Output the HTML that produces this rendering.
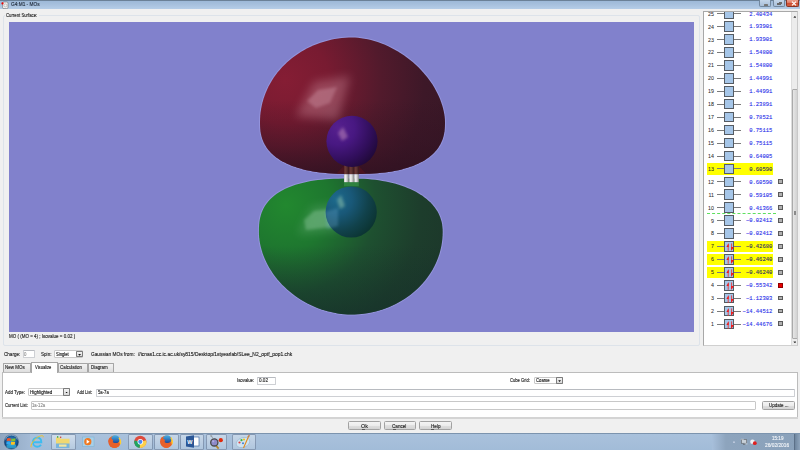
<!DOCTYPE html>
<html><head><meta charset="utf-8">
<style>
*{box-sizing:border-box;margin:0;padding:0}
html,body{width:800px;height:450px;overflow:hidden;background:#f0f0f0;font-family:"Liberation Sans",sans-serif;color:#1e1e1e}
.a{position:absolute}
.tx{position:absolute;line-height:1;transform-origin:0 0;white-space:pre;font-family:"Liberation Sans",sans-serif;-webkit-text-stroke:0.14px currentColor}
.t{position:absolute;font-size:4.6px;line-height:5px;white-space:pre;color:#222}
#title{left:0;top:0;width:800px;height:9px;background:linear-gradient(#6b8197 0,#6b8197 1px,#9db9d8 1px,#a5bfdc 4px,#b5cde7 9px)}
.wb{position:absolute;top:0;height:7.4px;border:0.6px solid #72889f;border-top:none;border-radius:0 0 2px 2px}
#gl{left:9px;top:22px;width:685px;height:310px;background:#8181cc}
#grp{left:3px;top:14.5px;width:697px;height:331px;border:1px solid #dde3ea;border-radius:2px}
#list{left:703px;top:11.3px;width:95px;height:334.5px;background:#fff;border:0.8px solid #a8a8a8;border-right-color:#c8c8c8;border-bottom-color:#d0d0d0;overflow:hidden}
.row{position:absolute;left:0;width:90px;height:12px}
.row.hl::before{content:"";position:absolute;left:3px;top:0.25px;width:66px;height:11.5px;background:#ffff00}
.num{position:absolute;left:0;width:10px;top:4px;text-align:right;font-size:5.3px;line-height:5px;color:#2a2a2a;-webkit-text-stroke:0.05px currentColor}
.ln{position:absolute;left:13.4px;top:5.6px;width:23.6px;height:0.8px;background:#7a7a7a}
.box{position:absolute;left:19.8px;top:0.8px;width:10.2px;height:10.5px;background:#a6c6e8;border:0.8px solid #555b62}
.box svg{position:absolute;left:0;top:0}
.val{position:absolute;left:34px;width:34.3px;text-align:right;top:3.9px;font-family:"Liberation Mono",monospace;font-size:5.5px;line-height:5px;color:#2a30ea;-webkit-text-stroke:0.1px currentColor}
.hl .val{color:#2c2c68}
.chk{position:absolute;left:74.4px;top:3.5px;width:4.8px;height:4.8px;border:1px solid #5a5a5a;background:#b0b0b0}
.chk.red{background:#e80000;border-color:#900000}
#sb{position:absolute;right:0;top:0;width:6.3px;height:100%;background:#ececec;border-left:0.5px solid #ddd}
.inp{position:absolute;background:#fff;border:0.7px solid #ced0d4;border-top-color:#b8bbc0;border-radius:1px}
.cmb{position:absolute;background:#fff;border:0.7px solid #c8c8c8;border-radius:1px}
.dd{position:absolute;right:-0.7px;top:-0.7px;width:7px;height:calc(100% + 1.4px);border:0.7px solid #7c7c7c;border-radius:0.8px;background:linear-gradient(#f4f4f4,#d8d8d8)}
.dd::after{content:"";position:absolute;left:1.5px;top:2.4px;width:2.8px;height:1.9px;background:#111;clip-path:polygon(0 0,100% 0,50% 100%)}
.tab{position:absolute;top:363.4px;height:9px;background:linear-gradient(#f3f3f3,#dedede);border:0.7px solid #a6a6a6;border-bottom:none;border-radius:1px 1px 0 0}
.btn{position:absolute;height:9px;border:0.8px solid #a2a2a2;border-radius:1.5px;background:linear-gradient(#f4f4f4 0,#ececec 50%,#e0e0e0 50%,#d4d4d4 100%)}
#task{left:0;top:433px;width:800px;height:17px;background:linear-gradient(#a9c1dc,#a2bcd8);border-top:0.6px solid #7c94ae}
.tb{position:absolute;top:434px;height:16px;border:0.6px solid rgba(90,110,140,0.55);border-radius:1.5px;background:linear-gradient(rgba(255,255,255,0.35),rgba(255,255,255,0.15))}
</style></head><body>

<!-- title bar -->
<div id="title" class="a"></div>
<svg class="a" style="left:1px;top:0.5px" width="8" height="8" viewBox="0 0 8 8"><rect x="1.6" y="1" width="5.4" height="6.6" rx="1.2" fill="#f2f2f2" stroke="#6a6a6a" stroke-width="0.6"/><circle cx="4.4" cy="4.4" r="1.5" fill="none" stroke="#999" stroke-width="0.5"/><circle cx="1.5" cy="2.4" r="1.1" fill="#e00"/></svg>
<div class="wb" style="left:759px;width:12.3px;background:linear-gradient(#c4d6ea,#a9c0da)"><i class="a" style="left:3.8px;top:3.9px;width:4.6px;height:1.6px;background:#e6d8c0;border:0.5px solid #777;border-radius:0.5px"></i></div>
<div class="wb" style="left:773px;width:11.8px;background:linear-gradient(#c4d6ea,#a9c0da)"><i class="a" style="left:4.8px;top:1.6px;width:3.4px;height:2.6px;border:0.6px solid #6a6a6a;background:#d0d0d0"></i><i class="a" style="left:3.4px;top:2.9px;width:3.4px;height:2.6px;border:0.6px solid #6a6a6a;background:#d0d0d0"></i></div>
<div class="wb" style="left:786.2px;width:12.6px;background:linear-gradient(#eca08e 0,#e07a62 45%,#cf4d33 55%,#d2603f 100%);border-color:#8a3424"><svg class="a" style="left:3.4px;top:0.9px" width="6" height="5" viewBox="0 0 6 5"><path d="M1 0.6L5 4.4M5 0.6L1 4.4" stroke="#fff" stroke-width="1.3"/></svg></div>

<!-- current surface group -->
<div id="grp" class="a"></div>
<div class="a" style="left:5px;top:12px;width:34px;height:6px;background:#f0f0f0"></div>
<div id="gl" class="a"></div>

<!-- molecule -->
<svg class="a" style="left:0;top:0" width="800" height="340" viewBox="0 0 800 340">
<defs>
<radialGradient id="gr" cx="285" cy="80" r="175" gradientUnits="userSpaceOnUse"><stop offset="0" stop-color="#851d34"/><stop offset="0.25" stop-color="#781b31"/><stop offset="0.55" stop-color="#521a2c"/><stop offset="0.8" stop-color="#3d1828"/><stop offset="1" stop-color="#381726"/></radialGradient>
<linearGradient id="grd" x1="0" y1="100" x2="0" y2="176" gradientUnits="userSpaceOnUse"><stop offset="0" stop-color="#2e1020" stop-opacity="0"/><stop offset="0.6" stop-color="#2e1020" stop-opacity="0.35"/><stop offset="1" stop-color="#2e1020" stop-opacity="0.75"/></linearGradient>
<radialGradient id="gg" cx="286" cy="205" r="180" gradientUnits="userSpaceOnUse"><stop offset="0" stop-color="#22882f"/><stop offset="0.25" stop-color="#1e772f"/><stop offset="0.5" stop-color="#1e5030"/><stop offset="0.75" stop-color="#1d3d2c"/><stop offset="1" stop-color="#1c362a"/></radialGradient>
<linearGradient id="ggd" x1="0" y1="245" x2="0" y2="316" gradientUnits="userSpaceOnUse"><stop offset="0" stop-color="#15302a" stop-opacity="0"/><stop offset="1" stop-color="#15302a" stop-opacity="0.6"/></linearGradient>
<radialGradient id="gp" cx="338" cy="128" r="48" gradientUnits="userSpaceOnUse"><stop offset="0" stop-color="#56208e"/><stop offset="0.35" stop-color="#481882"/><stop offset="0.7" stop-color="#300e5a"/><stop offset="1" stop-color="#1c0830"/></radialGradient>
<radialGradient id="gb" cx="336" cy="199" r="46" gradientUnits="userSpaceOnUse"><stop offset="0" stop-color="#1d6a8c"/><stop offset="0.35" stop-color="#195878"/><stop offset="0.7" stop-color="#11424c"/><stop offset="1" stop-color="#0b3330"/></radialGradient>
<linearGradient id="bond" x1="0" y1="0" x2="1" y2="0"><stop offset="0" stop-color="#c8c8c8"/><stop offset="0.35" stop-color="#f4f4f4"/><stop offset="1" stop-color="#8a8a8a"/></linearGradient>
<linearGradient id="bondr" x1="0" y1="0" x2="1" y2="0"><stop offset="0" stop-color="#5a2a2a"/><stop offset="0.35" stop-color="#6a3a38"/><stop offset="1" stop-color="#3a1a1e"/></linearGradient>
<filter id="bl3" x="-100%" y="-100%" width="300%" height="300%"><feGaussianBlur stdDeviation="5"/></filter>
<filter id="bl2" x="-50%" y="-50%" width="200%" height="200%"><feGaussianBlur stdDeviation="1.8"/></filter>
<filter id="bl1" x="-50%" y="-50%" width="200%" height="200%"><feGaussianBlur stdDeviation="1.2"/></filter>
</defs>
<path d="M445.00,122.00 L444.94,125.90 L444.77,128.79 L444.49,131.38 L444.09,133.79 L443.58,136.07 L442.95,138.24 L442.21,140.32 L441.36,142.32 L440.40,144.25 L439.33,146.11 L438.15,147.91 L436.85,149.65 L435.45,151.32 L433.94,152.94 L432.32,154.49 L430.59,155.99 L428.76,157.43 L426.82,158.82 L424.77,160.14 L422.63,161.41 L420.37,162.62 L418.02,163.77 L415.56,164.86 L413.00,165.89 L410.34,166.86 L407.57,167.77 L404.70,168.62 L401.73,169.41 L398.64,170.14 L395.45,170.81 L392.14,171.41 L388.71,171.95 L385.15,172.43 L381.45,172.85 L377.60,173.20 L373.55,173.49 L369.27,173.71 L364.66,173.87 L359.53,173.97 L352.60,174.00 L345.65,173.97 L340.51,173.87 L335.90,173.71 L331.61,173.49 L327.55,173.20 L323.68,172.85 L319.97,172.43 L316.41,171.95 L312.97,171.41 L309.66,170.81 L306.46,170.14 L303.37,169.41 L300.39,168.62 L297.51,167.77 L294.74,166.86 L292.07,165.89 L289.50,164.86 L287.04,163.77 L284.68,162.62 L282.42,161.41 L280.27,160.14 L278.22,158.82 L276.28,157.43 L274.44,155.99 L272.71,154.49 L271.09,152.94 L269.57,151.32 L268.17,149.65 L266.87,147.91 L265.68,146.11 L264.61,144.25 L263.64,142.32 L262.79,140.32 L262.05,138.24 L261.43,136.07 L260.91,133.79 L260.51,131.38 L260.23,128.79 L260.06,125.90 L260.00,122.00 L260.07,118.68 L260.29,115.37 L260.64,112.07 L261.14,108.78 L261.78,105.51 L262.56,102.27 L263.48,99.06 L264.53,95.89 L265.72,92.75 L267.05,89.66 L268.51,86.62 L270.09,83.64 L271.81,80.71 L273.65,77.85 L275.61,75.05 L277.69,72.33 L279.88,69.69 L282.19,67.12 L284.60,64.64 L287.12,62.25 L289.74,59.95 L292.46,57.75 L295.27,55.64 L298.17,53.64 L301.15,51.74 L304.22,49.95 L307.35,48.27 L310.56,46.71 L313.83,45.26 L317.16,43.93 L320.55,42.72 L323.99,41.64 L327.46,40.67 L330.98,39.83 L334.53,39.12 L338.11,38.54 L341.72,38.09 L345.33,37.76 L348.96,37.57 L352.60,37.50 L355.13,37.57 L358.06,37.79 L361.16,38.15 L364.36,38.66 L367.63,39.30 L370.95,40.09 L374.30,41.02 L377.66,42.08 L381.02,43.28 L384.38,44.62 L387.72,46.08 L391.02,47.67 L394.30,49.38 L397.52,51.22 L400.69,53.17 L403.80,55.23 L406.84,57.40 L409.80,59.67 L412.68,62.04 L415.47,64.51 L418.16,67.06 L420.76,69.69 L423.24,72.40 L425.61,75.18 L427.87,78.02 L430.00,80.92 L432.01,83.87 L433.88,86.86 L435.62,89.89 L437.22,92.94 L438.68,96.01 L439.99,99.08 L441.15,102.16 L442.17,105.22 L443.03,108.25 L443.74,111.24 L444.29,114.17 L444.68,117.00 L444.92,119.68Z" fill="none" stroke="#9494dc" stroke-width="2"/>
<path d="M442.70,232.00 L442.63,235.24 L442.42,238.47 L442.06,241.70 L441.57,244.91 L440.93,248.09 L440.16,251.26 L439.25,254.39 L438.20,257.49 L437.02,260.55 L435.70,263.57 L434.26,266.54 L432.68,269.45 L430.98,272.31 L429.16,275.11 L427.21,277.83 L425.15,280.49 L422.97,283.08 L420.68,285.58 L418.28,288.00 L415.78,290.34 L413.18,292.58 L410.48,294.73 L407.69,296.79 L404.82,298.74 L401.86,300.60 L398.82,302.34 L395.70,303.98 L392.52,305.51 L389.27,306.92 L385.97,308.22 L382.61,309.40 L379.20,310.46 L375.75,311.40 L372.25,312.22 L368.73,312.91 L365.18,313.48 L361.60,313.93 L358.01,314.25 L354.41,314.44 L350.80,314.50 L347.76,314.43 L344.49,314.23 L341.15,313.90 L337.76,313.43 L334.35,312.83 L330.93,312.10 L327.51,311.24 L324.10,310.26 L320.72,309.14 L317.37,307.90 L314.05,306.54 L310.78,305.06 L307.56,303.47 L304.40,301.76 L301.30,299.93 L298.27,298.00 L295.32,295.97 L292.46,293.84 L289.68,291.60 L286.99,289.28 L284.40,286.87 L281.92,284.38 L279.54,281.80 L277.28,279.15 L275.13,276.44 L273.10,273.66 L271.19,270.82 L269.41,267.93 L267.76,264.99 L266.25,262.01 L264.87,259.00 L263.63,255.97 L262.53,252.91 L261.57,249.84 L260.76,246.77 L260.09,243.71 L259.57,240.66 L259.20,237.66 L258.97,234.73 L258.90,232.00 L258.96,227.78 L259.12,224.73 L259.40,222.02 L259.79,219.51 L260.29,217.15 L260.90,214.91 L261.62,212.76 L262.45,210.70 L263.39,208.72 L264.43,206.81 L265.59,204.97 L266.85,203.20 L268.22,201.49 L269.70,199.85 L271.28,198.26 L272.97,196.73 L274.77,195.27 L276.67,193.86 L278.67,192.52 L280.77,191.23 L282.98,190.01 L285.29,188.84 L287.71,187.74 L290.22,186.69 L292.84,185.71 L295.57,184.79 L298.40,183.93 L301.33,183.13 L304.38,182.39 L307.54,181.72 L310.81,181.11 L314.22,180.56 L317.75,180.08 L321.44,179.66 L325.29,179.31 L329.35,179.02 L333.66,178.79 L338.32,178.63 L343.55,178.53 L350.80,178.50 L355.64,178.54 L359.89,178.65 L363.92,178.84 L367.82,179.10 L371.60,179.44 L375.29,179.85 L378.88,180.33 L382.40,180.89 L385.83,181.51 L389.18,182.22 L392.44,182.99 L395.63,183.83 L398.73,184.74 L401.74,185.72 L404.66,186.76 L407.49,187.88 L410.23,189.05 L412.87,190.29 L415.42,191.60 L417.86,192.96 L420.21,194.38 L422.44,195.86 L424.57,197.40 L426.60,199.00 L428.50,200.65 L430.30,202.35 L431.98,204.10 L433.55,205.90 L434.99,207.76 L436.32,209.66 L437.52,211.61 L438.60,213.60 L439.56,215.65 L440.39,217.74 L441.09,219.89 L441.67,222.09 L442.12,224.36 L442.44,226.71 L442.64,229.18Z" fill="none" stroke="#9494dc" stroke-width="2"/>
<path d="M445.00,122.00 L444.94,125.90 L444.77,128.79 L444.49,131.38 L444.09,133.79 L443.58,136.07 L442.95,138.24 L442.21,140.32 L441.36,142.32 L440.40,144.25 L439.33,146.11 L438.15,147.91 L436.85,149.65 L435.45,151.32 L433.94,152.94 L432.32,154.49 L430.59,155.99 L428.76,157.43 L426.82,158.82 L424.77,160.14 L422.63,161.41 L420.37,162.62 L418.02,163.77 L415.56,164.86 L413.00,165.89 L410.34,166.86 L407.57,167.77 L404.70,168.62 L401.73,169.41 L398.64,170.14 L395.45,170.81 L392.14,171.41 L388.71,171.95 L385.15,172.43 L381.45,172.85 L377.60,173.20 L373.55,173.49 L369.27,173.71 L364.66,173.87 L359.53,173.97 L352.60,174.00 L345.65,173.97 L340.51,173.87 L335.90,173.71 L331.61,173.49 L327.55,173.20 L323.68,172.85 L319.97,172.43 L316.41,171.95 L312.97,171.41 L309.66,170.81 L306.46,170.14 L303.37,169.41 L300.39,168.62 L297.51,167.77 L294.74,166.86 L292.07,165.89 L289.50,164.86 L287.04,163.77 L284.68,162.62 L282.42,161.41 L280.27,160.14 L278.22,158.82 L276.28,157.43 L274.44,155.99 L272.71,154.49 L271.09,152.94 L269.57,151.32 L268.17,149.65 L266.87,147.91 L265.68,146.11 L264.61,144.25 L263.64,142.32 L262.79,140.32 L262.05,138.24 L261.43,136.07 L260.91,133.79 L260.51,131.38 L260.23,128.79 L260.06,125.90 L260.00,122.00 L260.07,118.68 L260.29,115.37 L260.64,112.07 L261.14,108.78 L261.78,105.51 L262.56,102.27 L263.48,99.06 L264.53,95.89 L265.72,92.75 L267.05,89.66 L268.51,86.62 L270.09,83.64 L271.81,80.71 L273.65,77.85 L275.61,75.05 L277.69,72.33 L279.88,69.69 L282.19,67.12 L284.60,64.64 L287.12,62.25 L289.74,59.95 L292.46,57.75 L295.27,55.64 L298.17,53.64 L301.15,51.74 L304.22,49.95 L307.35,48.27 L310.56,46.71 L313.83,45.26 L317.16,43.93 L320.55,42.72 L323.99,41.64 L327.46,40.67 L330.98,39.83 L334.53,39.12 L338.11,38.54 L341.72,38.09 L345.33,37.76 L348.96,37.57 L352.60,37.50 L355.13,37.57 L358.06,37.79 L361.16,38.15 L364.36,38.66 L367.63,39.30 L370.95,40.09 L374.30,41.02 L377.66,42.08 L381.02,43.28 L384.38,44.62 L387.72,46.08 L391.02,47.67 L394.30,49.38 L397.52,51.22 L400.69,53.17 L403.80,55.23 L406.84,57.40 L409.80,59.67 L412.68,62.04 L415.47,64.51 L418.16,67.06 L420.76,69.69 L423.24,72.40 L425.61,75.18 L427.87,78.02 L430.00,80.92 L432.01,83.87 L433.88,86.86 L435.62,89.89 L437.22,92.94 L438.68,96.01 L439.99,99.08 L441.15,102.16 L442.17,105.22 L443.03,108.25 L443.74,111.24 L444.29,114.17 L444.68,117.00 L444.92,119.68Z" fill="url(#gr)"/>
<path d="M445.00,122.00 L444.94,125.90 L444.77,128.79 L444.49,131.38 L444.09,133.79 L443.58,136.07 L442.95,138.24 L442.21,140.32 L441.36,142.32 L440.40,144.25 L439.33,146.11 L438.15,147.91 L436.85,149.65 L435.45,151.32 L433.94,152.94 L432.32,154.49 L430.59,155.99 L428.76,157.43 L426.82,158.82 L424.77,160.14 L422.63,161.41 L420.37,162.62 L418.02,163.77 L415.56,164.86 L413.00,165.89 L410.34,166.86 L407.57,167.77 L404.70,168.62 L401.73,169.41 L398.64,170.14 L395.45,170.81 L392.14,171.41 L388.71,171.95 L385.15,172.43 L381.45,172.85 L377.60,173.20 L373.55,173.49 L369.27,173.71 L364.66,173.87 L359.53,173.97 L352.60,174.00 L345.65,173.97 L340.51,173.87 L335.90,173.71 L331.61,173.49 L327.55,173.20 L323.68,172.85 L319.97,172.43 L316.41,171.95 L312.97,171.41 L309.66,170.81 L306.46,170.14 L303.37,169.41 L300.39,168.62 L297.51,167.77 L294.74,166.86 L292.07,165.89 L289.50,164.86 L287.04,163.77 L284.68,162.62 L282.42,161.41 L280.27,160.14 L278.22,158.82 L276.28,157.43 L274.44,155.99 L272.71,154.49 L271.09,152.94 L269.57,151.32 L268.17,149.65 L266.87,147.91 L265.68,146.11 L264.61,144.25 L263.64,142.32 L262.79,140.32 L262.05,138.24 L261.43,136.07 L260.91,133.79 L260.51,131.38 L260.23,128.79 L260.06,125.90 L260.00,122.00 L260.07,118.68 L260.29,115.37 L260.64,112.07 L261.14,108.78 L261.78,105.51 L262.56,102.27 L263.48,99.06 L264.53,95.89 L265.72,92.75 L267.05,89.66 L268.51,86.62 L270.09,83.64 L271.81,80.71 L273.65,77.85 L275.61,75.05 L277.69,72.33 L279.88,69.69 L282.19,67.12 L284.60,64.64 L287.12,62.25 L289.74,59.95 L292.46,57.75 L295.27,55.64 L298.17,53.64 L301.15,51.74 L304.22,49.95 L307.35,48.27 L310.56,46.71 L313.83,45.26 L317.16,43.93 L320.55,42.72 L323.99,41.64 L327.46,40.67 L330.98,39.83 L334.53,39.12 L338.11,38.54 L341.72,38.09 L345.33,37.76 L348.96,37.57 L352.60,37.50 L355.13,37.57 L358.06,37.79 L361.16,38.15 L364.36,38.66 L367.63,39.30 L370.95,40.09 L374.30,41.02 L377.66,42.08 L381.02,43.28 L384.38,44.62 L387.72,46.08 L391.02,47.67 L394.30,49.38 L397.52,51.22 L400.69,53.17 L403.80,55.23 L406.84,57.40 L409.80,59.67 L412.68,62.04 L415.47,64.51 L418.16,67.06 L420.76,69.69 L423.24,72.40 L425.61,75.18 L427.87,78.02 L430.00,80.92 L432.01,83.87 L433.88,86.86 L435.62,89.89 L437.22,92.94 L438.68,96.01 L439.99,99.08 L441.15,102.16 L442.17,105.22 L443.03,108.25 L443.74,111.24 L444.29,114.17 L444.68,117.00 L444.92,119.68Z" fill="url(#grd)"/>
<polygon points="296,116 314,82 350,76 338,120" fill="#c88898" opacity="0.4" filter="url(#bl3)"/>
<polygon points="307,101 318,90 337,87 330,103 316,108" fill="#d098a8" opacity="0.38" filter="url(#bl2)"/>
<path d="M336.5,173.5 L343.8,165.8 L344.5,173.5Z M358.5,165.8 L366,173.5 L358.5,173.5Z" fill="#4a1420"/>
<g>
<rect x="344" y="165" width="4.8" height="9.5" fill="url(#bondr)"/><rect x="349.2" y="165" width="4.8" height="9.5" fill="url(#bondr)"/><rect x="354.2" y="165" width="4.6" height="9.5" fill="url(#bondr)"/>

</g>
<circle cx="352" cy="141.3" r="25.6" fill="url(#gp)"/>
<polygon points="338,133 343,127 348,137 342,141" fill="#c890c0" opacity="0.5" filter="url(#bl2)"/>
<path d="M442.70,232.00 L442.63,235.24 L442.42,238.47 L442.06,241.70 L441.57,244.91 L440.93,248.09 L440.16,251.26 L439.25,254.39 L438.20,257.49 L437.02,260.55 L435.70,263.57 L434.26,266.54 L432.68,269.45 L430.98,272.31 L429.16,275.11 L427.21,277.83 L425.15,280.49 L422.97,283.08 L420.68,285.58 L418.28,288.00 L415.78,290.34 L413.18,292.58 L410.48,294.73 L407.69,296.79 L404.82,298.74 L401.86,300.60 L398.82,302.34 L395.70,303.98 L392.52,305.51 L389.27,306.92 L385.97,308.22 L382.61,309.40 L379.20,310.46 L375.75,311.40 L372.25,312.22 L368.73,312.91 L365.18,313.48 L361.60,313.93 L358.01,314.25 L354.41,314.44 L350.80,314.50 L347.76,314.43 L344.49,314.23 L341.15,313.90 L337.76,313.43 L334.35,312.83 L330.93,312.10 L327.51,311.24 L324.10,310.26 L320.72,309.14 L317.37,307.90 L314.05,306.54 L310.78,305.06 L307.56,303.47 L304.40,301.76 L301.30,299.93 L298.27,298.00 L295.32,295.97 L292.46,293.84 L289.68,291.60 L286.99,289.28 L284.40,286.87 L281.92,284.38 L279.54,281.80 L277.28,279.15 L275.13,276.44 L273.10,273.66 L271.19,270.82 L269.41,267.93 L267.76,264.99 L266.25,262.01 L264.87,259.00 L263.63,255.97 L262.53,252.91 L261.57,249.84 L260.76,246.77 L260.09,243.71 L259.57,240.66 L259.20,237.66 L258.97,234.73 L258.90,232.00 L258.96,227.78 L259.12,224.73 L259.40,222.02 L259.79,219.51 L260.29,217.15 L260.90,214.91 L261.62,212.76 L262.45,210.70 L263.39,208.72 L264.43,206.81 L265.59,204.97 L266.85,203.20 L268.22,201.49 L269.70,199.85 L271.28,198.26 L272.97,196.73 L274.77,195.27 L276.67,193.86 L278.67,192.52 L280.77,191.23 L282.98,190.01 L285.29,188.84 L287.71,187.74 L290.22,186.69 L292.84,185.71 L295.57,184.79 L298.40,183.93 L301.33,183.13 L304.38,182.39 L307.54,181.72 L310.81,181.11 L314.22,180.56 L317.75,180.08 L321.44,179.66 L325.29,179.31 L329.35,179.02 L333.66,178.79 L338.32,178.63 L343.55,178.53 L350.80,178.50 L355.64,178.54 L359.89,178.65 L363.92,178.84 L367.82,179.10 L371.60,179.44 L375.29,179.85 L378.88,180.33 L382.40,180.89 L385.83,181.51 L389.18,182.22 L392.44,182.99 L395.63,183.83 L398.73,184.74 L401.74,185.72 L404.66,186.76 L407.49,187.88 L410.23,189.05 L412.87,190.29 L415.42,191.60 L417.86,192.96 L420.21,194.38 L422.44,195.86 L424.57,197.40 L426.60,199.00 L428.50,200.65 L430.30,202.35 L431.98,204.10 L433.55,205.90 L434.99,207.76 L436.32,209.66 L437.52,211.61 L438.60,213.60 L439.56,215.65 L440.39,217.74 L441.09,219.89 L441.67,222.09 L442.12,224.36 L442.44,226.71 L442.64,229.18Z" fill="url(#gg)"/>
<path d="M442.70,232.00 L442.63,235.24 L442.42,238.47 L442.06,241.70 L441.57,244.91 L440.93,248.09 L440.16,251.26 L439.25,254.39 L438.20,257.49 L437.02,260.55 L435.70,263.57 L434.26,266.54 L432.68,269.45 L430.98,272.31 L429.16,275.11 L427.21,277.83 L425.15,280.49 L422.97,283.08 L420.68,285.58 L418.28,288.00 L415.78,290.34 L413.18,292.58 L410.48,294.73 L407.69,296.79 L404.82,298.74 L401.86,300.60 L398.82,302.34 L395.70,303.98 L392.52,305.51 L389.27,306.92 L385.97,308.22 L382.61,309.40 L379.20,310.46 L375.75,311.40 L372.25,312.22 L368.73,312.91 L365.18,313.48 L361.60,313.93 L358.01,314.25 L354.41,314.44 L350.80,314.50 L347.76,314.43 L344.49,314.23 L341.15,313.90 L337.76,313.43 L334.35,312.83 L330.93,312.10 L327.51,311.24 L324.10,310.26 L320.72,309.14 L317.37,307.90 L314.05,306.54 L310.78,305.06 L307.56,303.47 L304.40,301.76 L301.30,299.93 L298.27,298.00 L295.32,295.97 L292.46,293.84 L289.68,291.60 L286.99,289.28 L284.40,286.87 L281.92,284.38 L279.54,281.80 L277.28,279.15 L275.13,276.44 L273.10,273.66 L271.19,270.82 L269.41,267.93 L267.76,264.99 L266.25,262.01 L264.87,259.00 L263.63,255.97 L262.53,252.91 L261.57,249.84 L260.76,246.77 L260.09,243.71 L259.57,240.66 L259.20,237.66 L258.97,234.73 L258.90,232.00 L258.96,227.78 L259.12,224.73 L259.40,222.02 L259.79,219.51 L260.29,217.15 L260.90,214.91 L261.62,212.76 L262.45,210.70 L263.39,208.72 L264.43,206.81 L265.59,204.97 L266.85,203.20 L268.22,201.49 L269.70,199.85 L271.28,198.26 L272.97,196.73 L274.77,195.27 L276.67,193.86 L278.67,192.52 L280.77,191.23 L282.98,190.01 L285.29,188.84 L287.71,187.74 L290.22,186.69 L292.84,185.71 L295.57,184.79 L298.40,183.93 L301.33,183.13 L304.38,182.39 L307.54,181.72 L310.81,181.11 L314.22,180.56 L317.75,180.08 L321.44,179.66 L325.29,179.31 L329.35,179.02 L333.66,178.79 L338.32,178.63 L343.55,178.53 L350.80,178.50 L355.64,178.54 L359.89,178.65 L363.92,178.84 L367.82,179.10 L371.60,179.44 L375.29,179.85 L378.88,180.33 L382.40,180.89 L385.83,181.51 L389.18,182.22 L392.44,182.99 L395.63,183.83 L398.73,184.74 L401.74,185.72 L404.66,186.76 L407.49,187.88 L410.23,189.05 L412.87,190.29 L415.42,191.60 L417.86,192.96 L420.21,194.38 L422.44,195.86 L424.57,197.40 L426.60,199.00 L428.50,200.65 L430.30,202.35 L431.98,204.10 L433.55,205.90 L434.99,207.76 L436.32,209.66 L437.52,211.61 L438.60,213.60 L439.56,215.65 L440.39,217.74 L441.09,219.89 L441.67,222.09 L442.12,224.36 L442.44,226.71 L442.64,229.18Z" fill="url(#ggd)"/>
<polygon points="298,234 312,207 340,204 340,230" fill="#78b888" opacity="0.32" filter="url(#bl3)"/>
<polygon points="304,220 314,211 338,208 338,226 306,230" fill="#88c498" opacity="0.42" filter="url(#bl2)"/>
<rect x="344" y="174.3" width="4.8" height="8" fill="url(#bond)"/><rect x="349.2" y="174.3" width="4.8" height="8" fill="url(#bond)"/><rect x="354.2" y="174.3" width="4.6" height="8" fill="url(#bond)"/>
<rect x="344" y="182.3" width="14.8" height="4" fill="#3a9a4a" opacity="0.6"/>
<circle cx="351.2" cy="212" r="25.6" fill="url(#gb)"/>
<polygon points="325,212 338,208 338,226 327,229" fill="#6aaad0" opacity="0.3" filter="url(#bl2)"/>
<polygon points="337,200 341,195 345,206 340,209" fill="#a0d0b0" opacity="0.45" filter="url(#bl2)"/>
</svg>


<!-- MO list -->
<div id="list" class="a">
<div class="row" style="top:-4.62px"><span class="num">25</span><i class="ln"></i><b class="box"></b><span class="val">2.40434</span></div>
<div class="row" style="top:8.31px"><span class="num">24</span><i class="ln"></i><b class="box"></b><span class="val">1.93901</span></div>
<div class="row" style="top:21.24px"><span class="num">23</span><i class="ln"></i><b class="box"></b><span class="val">1.93901</span></div>
<div class="row" style="top:34.17px"><span class="num">22</span><i class="ln"></i><b class="box"></b><span class="val">1.54800</span></div>
<div class="row" style="top:47.10px"><span class="num">21</span><i class="ln"></i><b class="box"></b><span class="val">1.54800</span></div>
<div class="row" style="top:60.03px"><span class="num">20</span><i class="ln"></i><b class="box"></b><span class="val">1.44991</span></div>
<div class="row" style="top:72.96px"><span class="num">19</span><i class="ln"></i><b class="box"></b><span class="val">1.44991</span></div>
<div class="row" style="top:85.89px"><span class="num">18</span><i class="ln"></i><b class="box"></b><span class="val">1.23891</span></div>
<div class="row" style="top:98.82px"><span class="num">17</span><i class="ln"></i><b class="box"></b><span class="val">0.78521</span></div>
<div class="row" style="top:111.75px"><span class="num">16</span><i class="ln"></i><b class="box"></b><span class="val">0.75115</span></div>
<div class="row" style="top:124.68px"><span class="num">15</span><i class="ln"></i><b class="box"></b><span class="val">0.75115</span></div>
<div class="row" style="top:137.61px"><span class="num">14</span><i class="ln"></i><b class="box"></b><span class="val">0.64005</span></div>
<div class="row hl" style="top:150.54px"><span class="num">13</span><i class="ln"></i><b class="box"></b><span class="val">0.60590</span></div>
<div class="row" style="top:163.47px"><span class="num">12</span><i class="ln"></i><b class="box"></b><span class="val">0.60590</span><i class="chk"></i></div>
<div class="row" style="top:176.40px"><span class="num">11</span><i class="ln"></i><b class="box"></b><span class="val">0.59105</span><i class="chk"></i></div>
<div class="row" style="top:189.33px"><span class="num">10</span><i class="ln"></i><b class="box"></b><span class="val">0.41366</span><i class="chk"></i></div>
<div class="row" style="top:202.26px"><span class="num">9</span><i class="ln"></i><b class="box"></b><span class="val">−0.02412</span><i class="chk"></i></div>
<div class="row" style="top:215.19px"><span class="num">8</span><i class="ln"></i><b class="box"></b><span class="val">−0.02412</span><i class="chk"></i></div>
<div class="row hl" style="top:228.12px"><span class="num">7</span><i class="ln"></i><b class="box"><svg width="10" height="10" viewBox="0 0 10 10"><path d="M3.2 8.8V2.4" stroke="#e83838" stroke-width="0.9"/><path d="M1.4 4.9L3.7 1.0V4.9Z" fill="#f01818"/><path d="M6.6 1.4V7.8" stroke="#e83838" stroke-width="0.9"/><path d="M6.1 5.0H9.0L6.1 9.0Z" fill="#f01818"/></svg></b><span class="val">−0.42680</span><i class="chk"></i></div>
<div class="row hl" style="top:241.05px"><span class="num">6</span><i class="ln"></i><b class="box"><svg width="10" height="10" viewBox="0 0 10 10"><path d="M3.2 8.8V2.4" stroke="#e83838" stroke-width="0.9"/><path d="M1.4 4.9L3.7 1.0V4.9Z" fill="#f01818"/><path d="M6.6 1.4V7.8" stroke="#e83838" stroke-width="0.9"/><path d="M6.1 5.0H9.0L6.1 9.0Z" fill="#f01818"/></svg></b><span class="val">−0.46240</span><i class="chk"></i></div>
<div class="row hl" style="top:253.98px"><span class="num">5</span><i class="ln"></i><b class="box"><svg width="10" height="10" viewBox="0 0 10 10"><path d="M3.2 8.8V2.4" stroke="#e83838" stroke-width="0.9"/><path d="M1.4 4.9L3.7 1.0V4.9Z" fill="#f01818"/><path d="M6.6 1.4V7.8" stroke="#e83838" stroke-width="0.9"/><path d="M6.1 5.0H9.0L6.1 9.0Z" fill="#f01818"/></svg></b><span class="val">−0.46240</span><i class="chk"></i></div>
<div class="row" style="top:266.91px"><span class="num">4</span><i class="ln"></i><b class="box"><svg width="10" height="10" viewBox="0 0 10 10"><path d="M3.2 8.8V2.4" stroke="#e83838" stroke-width="0.9"/><path d="M1.4 4.9L3.7 1.0V4.9Z" fill="#f01818"/><path d="M6.6 1.4V7.8" stroke="#e83838" stroke-width="0.9"/><path d="M6.1 5.0H9.0L6.1 9.0Z" fill="#f01818"/></svg></b><span class="val">−0.55342</span><i class="chk red"></i></div>
<div class="row" style="top:279.84px"><span class="num">3</span><i class="ln"></i><b class="box"><svg width="10" height="10" viewBox="0 0 10 10"><path d="M3.2 8.8V2.4" stroke="#e83838" stroke-width="0.9"/><path d="M1.4 4.9L3.7 1.0V4.9Z" fill="#f01818"/><path d="M6.6 1.4V7.8" stroke="#e83838" stroke-width="0.9"/><path d="M6.1 5.0H9.0L6.1 9.0Z" fill="#f01818"/></svg></b><span class="val">−1.12303</span><i class="chk"></i></div>
<div class="row" style="top:292.77px"><span class="num">2</span><i class="ln"></i><b class="box"><svg width="10" height="10" viewBox="0 0 10 10"><path d="M3.2 8.8V2.4" stroke="#e83838" stroke-width="0.9"/><path d="M1.4 4.9L3.7 1.0V4.9Z" fill="#f01818"/><path d="M6.6 1.4V7.8" stroke="#e83838" stroke-width="0.9"/><path d="M6.1 5.0H9.0L6.1 9.0Z" fill="#f01818"/></svg></b><span class="val">−14.44512</span><i class="chk"></i></div>
<div class="row" style="top:305.70px"><span class="num">1</span><i class="ln"></i><b class="box"><svg width="10" height="10" viewBox="0 0 10 10"><path d="M3.2 8.8V2.4" stroke="#e83838" stroke-width="0.9"/><path d="M1.4 4.9L3.7 1.0V4.9Z" fill="#f01818"/><path d="M6.6 1.4V7.8" stroke="#e83838" stroke-width="0.9"/><path d="M6.1 5.0H9.0L6.1 9.0Z" fill="#f01818"/></svg></b><span class="val">−14.44676</span><i class="chk"></i></div>
<i class="a" style="left:3px;top:200.89px;width:69px;height:0;border-top:0.6px dashed #5ee05e"></i>
<div id="sb"><i class="a" style="left:0.3px;top:77px;width:5.8px;height:250px;background:linear-gradient(90deg,#e6e6e6,#d2d2d2);border:0.5px solid #aaa;border-radius:1px"></i>
<i class="a" style="left:1.7px;top:3.4px;width:3px;height:2px;background:#333;clip-path:polygon(50% 0,100% 100%,0 100%)"></i>
<i class="a" style="left:2.6px;top:199.2px;width:1.6px;height:3.4px;background:#8a8a8a"></i>
<i class="a" style="left:1.7px;top:329.2px;width:3px;height:2px;background:#333;clip-path:polygon(0 0,100% 0,50% 100%)"></i></div>
</div>

<!-- charge row -->
<div class="inp" style="left:22.5px;top:350.2px;width:12px;height:8.3px"></div>
<div class="cmb" style="left:53.8px;top:350.2px;width:29.2px;height:7.5px;background:#fff"><div class="dd"></div></div>

<!-- tabs -->
<div class="a" style="left:2px;top:372px;width:795.5px;height:45px;background:#fff;border:0.7px solid #bcbcbc;border-bottom:none"></div>
<div class="a" style="left:2px;top:416.8px;width:795.5px;height:2px;background:#d4d4d4"></div>
<div class="tab" style="left:2.5px;width:28.5px"></div>
<div class="tab" style="left:57.5px;width:30.8px"></div>
<div class="tab" style="left:88.3px;width:25.5px"></div>
<div class="a" style="left:31px;top:362.3px;width:26.5px;height:10.5px;background:#fff;border:0.7px solid #a6a6a6;border-bottom:none"></div>

<!-- tab pane contents -->
<div class="inp" style="left:257px;top:376.5px;width:19px;height:8px"></div>
<div class="cmb" style="left:533.5px;top:376.5px;width:29.5px;height:7.8px;background:#fff"><div class="dd"></div></div>

<div class="cmb" style="left:28px;top:387.8px;width:42px;height:8.2px;background:#fff"><div class="dd"></div></div>
<div class="inp" style="left:96px;top:388.6px;width:699px;height:8px"></div>
<div class="inp" style="left:30.5px;top:401.3px;width:725px;height:8.3px;border-color:#c8c8c8"></div>
<div class="btn" style="left:762.4px;top:401.2px;width:32.2px"></div>

<!-- dialog buttons -->
<div class="btn" style="left:348.2px;top:421.3px;width:32.4px"></div>
<div class="btn" style="left:383.5px;top:421.3px;width:32.8px"></div>
<div class="btn" style="left:419px;top:421.3px;width:33px"></div>

<i class="a" style="left:361.5px;top:429.2px;width:3.2px;height:0.5px;background:#555"></i>
<i class="a" style="left:392.6px;top:429.2px;width:3px;height:0.5px;background:#555"></i>
<i class="a" style="left:430.8px;top:429.2px;width:3px;height:0.5px;background:#555"></i>
<!-- taskbar -->
<div id="task" class="a"></div>

<div class="a" style="left:0;top:433.5px;width:30px;height:16.5px;background:linear-gradient(90deg,#8fa6c0,#a3bad5)"></div>
<div class="a" style="left:712px;top:433.5px;width:88px;height:16.5px;background:linear-gradient(90deg,#a7bfdb 0,#8da4bd 14px,#8aa1ba 100%)"></div>
<div class="a" style="left:794px;top:433.5px;width:6px;height:16.5px;background:linear-gradient(90deg,#6f869f,#8fa5bd);border-left:0.6px solid #5c7088"></div>
<div class="tb" style="left:50.5px;width:25px;background:linear-gradient(rgba(255,255,255,0.45),rgba(255,255,255,0.2))"></div>
<div class="tb" style="left:128px;width:25px"></div>
<div class="tb" style="left:154px;width:24.5px"></div>
<div class="tb" style="left:180px;width:24.3px"></div>
<div class="tb" style="left:205.5px;width:21px"></div>
<div class="tb" style="left:231.5px;width:24.5px"></div>
<svg class="a" style="left:0;top:430px" width="800" height="20" viewBox="0 430 800 20">
<defs>
<radialGradient id="orb" cx="0.5" cy="0.45" r="0.6"><stop offset="0" stop-color="#3a90d0"/><stop offset="0.6" stop-color="#1a5c9a"/><stop offset="1" stop-color="#0c3060"/></radialGradient>
<radialGradient id="ff" cx="0.75" cy="0.45" r="0.8"><stop offset="0" stop-color="#ffd84a"/><stop offset="0.35" stop-color="#f79a28"/><stop offset="1" stop-color="#dc4a28"/></radialGradient>
<linearGradient id="ffg" x1="0" y1="0" x2="0" y2="1"><stop offset="0" stop-color="#48b4e8"/><stop offset="1" stop-color="#1a3c90"/></linearGradient>
</defs>
<!-- start orb -->
<circle cx="11.4" cy="441.9" r="7.6" fill="#2a4a6c" opacity="0.5"/>
<circle cx="11.4" cy="441.9" r="7" fill="url(#orb)"/>
<ellipse cx="11.4" cy="446" rx="5" ry="2.5" fill="#38c8f4" opacity="0.6"/>
<path d="M5.5,439.5 A6.2,6.2 0 0 1 17.3,439.5" fill="none" stroke="#d8ecfa" stroke-width="0.7" opacity="0.7"/>
<path d="M7,438.4 Q8.8,437.6 10.9,438.4 L10.6,441.1 Q8.6,440.4 6.7,441.1Z" fill="#f0542a"/>
<path d="M11.5,438.5 Q13.4,439.1 15.6,438.3 L15.2,441.1 Q13.2,441.8 11.2,441.1Z" fill="#80c030"/>
<path d="M6.6,441.7 Q8.5,441 10.5,441.7 L10.2,444.4 Q8.2,443.7 6.3,444.4Z" fill="#30a8f0"/>
<path d="M11.1,441.7 Q13.1,442.4 15.1,441.7 L14.7,444.5 Q12.7,445.2 10.8,444.5Z" fill="#ffc020"/>
<!-- IE -->
<path d="M33.2,442.2 H41.3 C41.3,439.4 39.5,437.6 37.2,437.6 C34.8,437.6 32.9,439.6 32.9,442.2 C32.9,444.8 34.8,446.7 37.3,446.7 C39,446.7 40.3,445.9 41,444.7" fill="none" stroke="#3cbcf0" stroke-width="1.9"/>
<path d="M31.3,447.3 C29.8,445.5 34,438.5 39.5,436.3 C42,435.3 43.8,435.5 43.2,437.3" fill="none" stroke="#f2c228" stroke-width="1"/>
<!-- folder -->
<path d="M56,437.5 h4 l1,1.2 h8.5 v9 h-13.5Z" fill="#f1d870"/>
<rect x="57" y="436.2" width="1.3" height="1.5" fill="#3aa83a"/><rect x="60" y="436.6" width="1.3" height="1.3" fill="#d04040"/>
<path d="M56,443.5 h13.5 v4.5 h-13.5Z" fill="#78b4dc"/>
<rect x="59" y="444.5" width="7.5" height="2.2" fill="#f3e6a0"/>
<!-- media player -->
<rect x="82.5" y="437" width="11.5" height="9.5" fill="#a6cfe8" stroke="#7aaed0" stroke-width="0.5"/>
<circle cx="87.8" cy="441.7" r="3.6" fill="#f07820"/>
<path d="M86.6,439.6 L89.6,441.7 L86.6,443.8Z" fill="#fff"/>
<!-- firefox 1 -->
<circle cx="114.5" cy="441.8" r="6.2" fill="url(#ff)"/>
<circle cx="115.3" cy="439.6" r="4.3" fill="url(#ffg)"/>
<path d="M108.9,438.8 C110.1,437.2 111.3,438.4 112.1,439.2 C113.1,439.8 113.5,441.2 112.7,442.0 C113.9,443.4 116.9,443.4 118.7,442.2 L120.5,443.3 C119.5,446.8 116.5,448.1 114.5,448.0 C110.5,447.8 108.0,443.8 108.9,438.8Z" fill="#e8602a"/>
<path d="M118.9,437.8 C120.5,439.8 120.9,442.8 120.1,444.3" fill="none" stroke="#ffd030" stroke-width="1.1"/>
<!-- chrome -->
<circle cx="140.3" cy="441.8" r="6.1" fill="#dd4b3e"/>
<path d="M140.3,441.8 L146.2,440.2 A6.1,6.1 0 0 1 139.6,447.9Z" fill="#fcd04b"/>
<path d="M140.3,441.8 L139.6,447.9 A6.1,6.1 0 0 1 134.3,440.5Z" fill="#1ea362"/>
<circle cx="140.3" cy="441.8" r="2.8" fill="#fff"/>
<circle cx="140.3" cy="441.8" r="2.1" fill="#4a8af4"/>
<!-- firefox 2 -->
<circle cx="166.3" cy="441.7" r="6.2" fill="url(#ff)"/>
<circle cx="167.1" cy="439.5" r="4.3" fill="url(#ffg)"/>
<path d="M160.7,438.7 C161.9,437.1 163.1,438.3 163.9,439.1 C164.9,439.7 165.3,441.1 164.5,441.9 C165.7,443.3 168.7,443.3 170.5,442.1 L172.3,443.2 C171.3,446.7 168.3,448.0 166.3,447.9 C162.3,447.7 159.8,443.7 160.7,438.7Z" fill="#e8602a"/>
<path d="M170.7,437.7 C172.3,439.7 172.7,442.7 171.9,444.2" fill="none" stroke="#ffd030" stroke-width="1.1"/>
<!-- word -->
<rect x="192" y="437" width="7" height="9" fill="#fff" stroke="#2b5797" stroke-width="0.6"/>
<path d="M186,436.5 L194,435.3 V447.8 L186,446.5Z" fill="#2b5797"/>
<text x="187.2" y="444.3" font-family="Liberation Sans" font-size="5.5" font-weight="bold" fill="#fff">W</text>
<!-- gaussview -->
<path d="M216,445.5 L218.6,448.6" stroke="#b8862a" stroke-width="1.9"/>
<circle cx="214.3" cy="442.4" r="3.6" fill="#8e8ac8" stroke="#4a4a4a" stroke-width="1.3"/>
<circle cx="213.2" cy="441.3" r="1.1" fill="#c8c4f0" opacity="0.6"/>
<circle cx="220.8" cy="440.2" r="2.1" fill="#e02a0c"/>
<path d="M211,435.4 L213,438.6 M210.2,436 h2" stroke="#888" stroke-width="0.7"/>
<!-- paint -->
<ellipse cx="243" cy="442.5" rx="7" ry="4.8" transform="rotate(-20 243 442.5)" fill="#cfe4f2" stroke="#8fb0c8" stroke-width="0.5"/>
<circle cx="239.5" cy="442.5" r="1.1" fill="#e04040"/><circle cx="241.5" cy="440.2" r="1.1" fill="#40b040"/><circle cx="244" cy="439.5" r="1.1" fill="#f0c020"/><circle cx="243" cy="443.3" r="1" fill="#4080d0"/>
<path d="M243.5,448 L248.5,436.5" stroke="#e08a20" stroke-width="1.1"/>
<path d="M248,437 L249.5,435.3" stroke="#c08050" stroke-width="1.6"/>
<!-- tray -->
<path d="M732.8,442.6 L734,441.3 L735.2,442.6Z" fill="#eef"/>
<rect x="741.6" y="439.6" width="5" height="3.6" fill="#c8d0d8" stroke="#555" stroke-width="0.5"/>
<path d="M740.8,439.3 h3 M744.5,443.9 h3" stroke="#e8eef4" stroke-width="0.6"/>
<path d="M743,444.4 h2.4" stroke="#555" stroke-width="0.6"/>
<circle cx="752.5" cy="441.8" r="2.3" fill="#eef0f4"/>
<circle cx="754.8" cy="443.2" r="1.9" fill="#e02020"/>
</svg>

<div class="tx" style="left:10.86px;top:2.34px;font-size:5.71px;color:#1e2a3a;transform:scaleX(0.835)">G4:M1 - MOs</div>
<div class="tx" style="left:5.99px;top:12.64px;font-size:5.71px;color:#222;transform:scaleX(0.747)">Current Surface:</div>
<div class="tx" style="left:8.83px;top:334.04px;font-size:5.71px;color:#222;transform:scaleX(0.788)">MO ( (MO = 4) ; Isovalue = 0.02 )</div>
<div class="tx" style="left:3.87px;top:351.74px;font-size:5.71px;color:#222;transform:scaleX(0.805)">Charge:</div>
<div class="tx" style="left:24.36px;top:351.74px;font-size:5.71px;color:#8a8a8a;transform:scaleX(0.761)">0</div>
<div class="tx" style="left:40.97px;top:351.74px;font-size:5.71px;color:#222;transform:scaleX(0.805)">Spin:</div>
<div class="tx" style="left:55.69px;top:351.94px;font-size:5.71px;color:#111;transform:scaleX(0.730)">Singlet</div>
<div class="tx" style="left:90.96px;top:351.74px;font-size:5.71px;color:#222;transform:scaleX(0.836)">Gaussian MOs from:</div>
<div class="tx" style="left:137.50px;top:351.74px;font-size:5.71px;color:#222;transform:scaleX(0.859)">//icnas1.cc.ic.ac.uk/sy815/Desktop/1styearlab/SLee_N2_optf_pop1.chk</div>
<div class="tx" style="left:5.42px;top:365.44px;font-size:5.71px;color:#222;transform:scaleX(0.793)">New MOs</div>
<div class="tx" style="left:34.80px;top:364.74px;font-size:5.71px;color:#222;transform:scaleX(0.722)">Visualize</div>
<div class="tx" style="left:60.18px;top:365.44px;font-size:5.71px;color:#222;transform:scaleX(0.779)">Calculation</div>
<div class="tx" style="left:91.33px;top:365.44px;font-size:5.71px;color:#222;transform:scaleX(0.776)">Diagram</div>
<div class="tx" style="left:236.97px;top:377.74px;font-size:5.71px;color:#222;transform:scaleX(0.753)">Isovalue:</div>
<div class="tx" style="left:258.80px;top:377.94px;font-size:5.71px;color:#222;transform:scaleX(0.812)">0.02</div>
<div class="tx" style="left:509.99px;top:377.64px;font-size:5.71px;color:#222;transform:scaleX(0.723)">Cube Grid:</div>
<div class="tx" style="left:535.69px;top:377.74px;font-size:5.71px;color:#111;transform:scaleX(0.738)">Coarse</div>
<div class="tx" style="left:5.00px;top:389.94px;font-size:5.71px;color:#222;transform:scaleX(0.780)">Add Type:</div>
<div class="tx" style="left:29.83px;top:389.64px;font-size:5.71px;color:#111;transform:scaleX(0.780)">Highlighted</div>
<div class="tx" style="left:77.00px;top:389.94px;font-size:5.71px;color:#222;transform:scaleX(0.692)">Add List:</div>
<div class="tx" style="left:97.69px;top:390.04px;font-size:5.71px;color:#222;transform:scaleX(0.743)">5a-7a</div>
<div class="tx" style="left:4.79px;top:402.94px;font-size:5.71px;color:#222;transform:scaleX(0.737)">Current List:</div>
<div class="tx" style="left:32.15px;top:403.04px;font-size:5.71px;color:#8a8a8a;transform:scaleX(0.734)">1a-12a</div>
<div class="tx" style="left:768.73px;top:402.74px;font-size:5.71px;color:#222;transform:scaleX(0.786)">Update ...</div>
<div class="tx" style="left:361.23px;top:423.74px;font-size:5.71px;color:#222;transform:scaleX(0.936)">Ok</div>
<div class="tx" style="left:392.47px;top:423.74px;font-size:5.71px;color:#222;transform:scaleX(0.806)">Cancel</div>
<div class="tx" style="left:430.52px;top:423.74px;font-size:5.71px;color:#222;transform:scaleX(0.807)">Help</div>
<div class="tx" style="left:771.62px;top:436.34px;font-size:5.71px;color:#f2f5f9;transform:scaleX(0.800)">15:19</div>
<div class="tx" style="left:764.96px;top:442.84px;font-size:5.71px;color:#f2f5f9;transform:scaleX(0.845)">26/02/2016</div>
</body></html>
